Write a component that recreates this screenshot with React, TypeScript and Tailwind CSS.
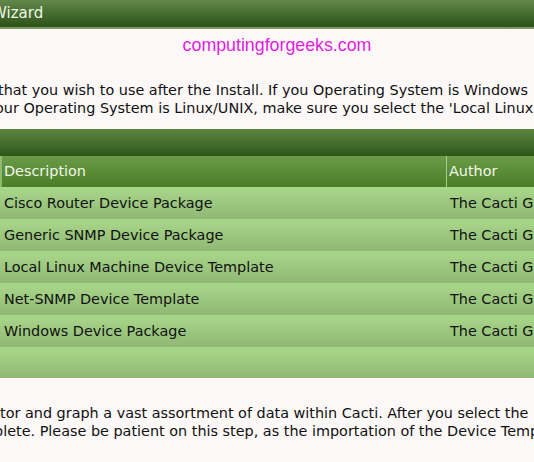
import React from "react";

const rows = [
  "Cisco Router Device Package",
  "Generic SNMP Device Package",
  "Local Linux Machine Device Template",
  "Net-SNMP Device Template",
  "Windows Device Package",
];

export default function App() {
  return (
    <div
      className="w-[534px] h-[462px] overflow-hidden bg-[#fcf8f8] text-[#111] text-[14.4px]"
      style={{ fontFamily: '"DejaVu Sans", Verdana, sans-serif' }}
    >
      <div className="h-[27px] bg-gradient-to-b from-[#63884a] to-[#2c5218] flex items-center">
        <span className="ml-[-8px] text-[15px] text-[#eef5e6] leading-none whitespace-nowrap">Wizard</span>
      </div>
      <div className="h-[2px] bg-[#7b9a63]" />
      <div className="h-[26px] flex items-end justify-center">
        <span
          className="text-[17.8px] text-[#e01ee0] leading-none mr-[-20px]"
          style={{ fontFamily: '"Liberation Sans", Arial, sans-serif' }}
        >
          computingforgeeks.com
        </span>
      </div>
      <div className="mt-[26px] whitespace-nowrap leading-[18px]">
        <div className="ml-[-2px]">that you wish to use after the Install. If you Operating System is Windows</div>
        <div className="ml-[-5px]">our Operating System is Linux/UNIX, make sure you select the 'Local Linux</div>
      </div>
      <div className="mt-[12px]">
        <div className="h-[27px] bg-gradient-to-b from-[#5d873f] to-[#2d5719]" />
        <div className="h-[31px] flex text-[#f2f8ea] bg-gradient-to-b from-[#6b9b48] to-[#4a7e25] whitespace-nowrap">
          <div className="w-[447px] shrink-0 flex items-center pl-[2px] border-l-2 border-[#8fb870] border-r border-r-[#a9cb8e]">
            Description
          </div>
          <div className="flex-1 flex items-center pl-[2px]">Author</div>
        </div>
        {rows.map((r) => (
          <div
            key={r}
            className="h-[32px] flex bg-gradient-to-b from-[#a9d88a] to-[#90b874] whitespace-nowrap"
          >
            <div className="w-[447px] shrink-0 flex items-center pl-[4px] pt-[1px]">{r}</div>
            <div className="flex-1 flex items-center pl-[3px] pt-[1px]">The Cacti Group</div>
          </div>
        ))}
        <div className="h-[31px] bg-gradient-to-b from-[#a9d88a] to-[#90b874]" />
      </div>
      <div className="mt-[26px] whitespace-nowrap leading-[18px]">
        <div>tor and graph a vast assortment of data within Cacti. After you select the</div>
        <div className="ml-[-6px]">plete. Please be patient on this step, as the importation of the Device Templates</div>
      </div>
    </div>
  );
}
